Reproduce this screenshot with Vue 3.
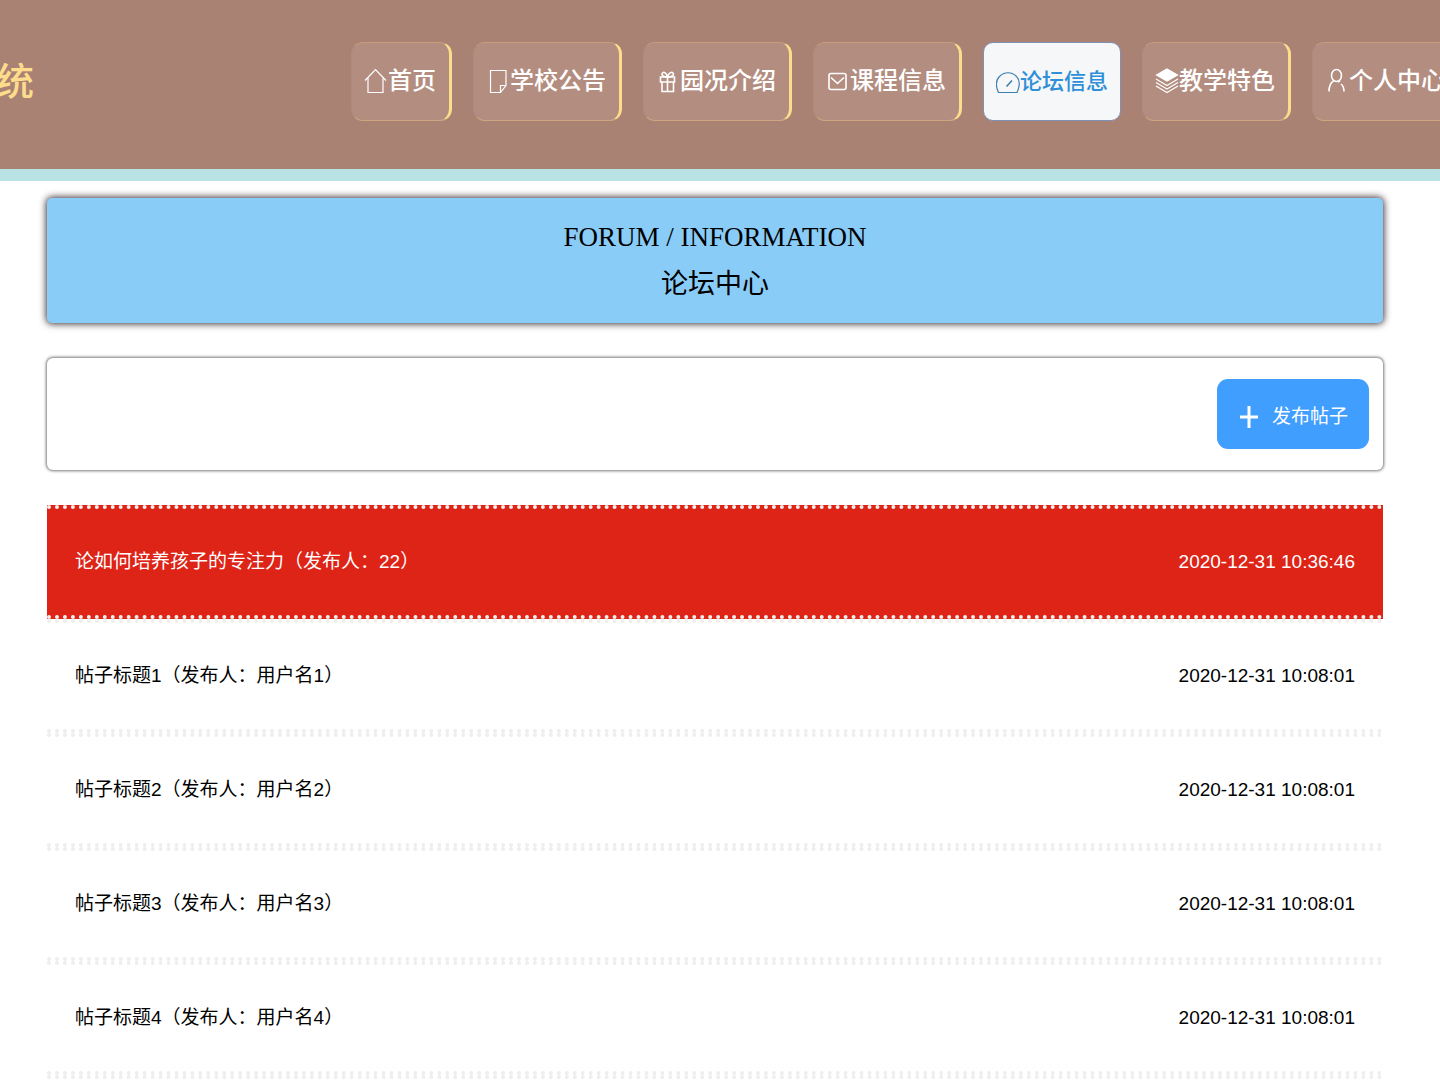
<script setup>
const navItems = [
  { label: '首页', icon: 'house' },
  { label: '学校公告', icon: 'note' },
  { label: '园况介绍', icon: 'gift' },
  { label: '课程信息', icon: 'mail' },
  { label: '论坛信息', icon: 'gauge', active: true },
  { label: '教学特色', icon: 'layers' },
  { label: '个人中心', icon: 'user' },
]

const posts = [
  { title: '论如何培养孩子的专注力（发布人：22）', time: '2020-12-31 10:36:46', highlighted: true },
  { title: '帖子标题1（发布人：用户名1）', time: '2020-12-31 10:08:01' },
  { title: '帖子标题2（发布人：用户名2）', time: '2020-12-31 10:08:01' },
  { title: '帖子标题3（发布人：用户名3）', time: '2020-12-31 10:08:01' },
  { title: '帖子标题4（发布人：用户名4）', time: '2020-12-31 10:08:01' },
]
</script>

<template>
  <div class="page">
    <header class="header">
      <div class="logo">统</div>
      <nav class="nav">
        <a
          v-for="item in navItems"
          :key="item.label"
          href="#"
          class="nav-item"
          :class="{ active: item.active }"
        >
          <svg class="icon" viewBox="0 0 24 28" aria-hidden="true">
            <path v-if="item.icon === 'house'" d="M1 13.5 11.5 2.500 22 13.500M4 11v14.500h15V11" />
            <g v-else-if="item.icon === 'note'">
              <path d="M4.500 3.500h15.500v15l-5.500 7h-10z" />
              <path d="M20 18.500h-5.500v7" />
            </g>
            <g v-else-if="item.icon === 'gift'" class="medium">
              <path d="M4.500 10h14v5h-14zM6 15v9.500h11.500V15M11.500 10v14.500" />
              <path d="M11.500 10C6.500 10 5 7.500 6.500 6S10.500 6 11.500 10C12.500 6 15.500 4.500 17 6S16.500 10 11.500 10z" />
            </g>
            <g v-else-if="item.icon === 'mail'" class="medium">
              <rect x="3" y="6.500" width="17" height="16" rx="2" />
              <path d="m5 10.500 6.500 6 6.500-6" />
            </g>
            <g v-else-if="item.icon === 'gauge'">
              <path d="M2.500 24.500C-.5 18 0 12 3.500 8.500c4.500-5 12.500-5 17 0C24 12 24 18 21 24.500z" />
              <path class="medium" d="m10.500 18.500 5.500-6" />
            </g>
            <g v-else-if="item.icon === 'layers'">
              <path class="solid" d="m12 2 10.500 6L12 14 1.500 8z" />
              <path d="m1 12 11 6.500L23 12M1 15.500 12 22l11-6.500M1 19l11 6.500L23 19" />
            </g>
            <g v-else class="medium">
              <ellipse cx="11.500" cy="8.500" rx="5" ry="6" />
              <path d="M8.500 14c-3.500 2-4.500 5.500-4.500 10.500M15 14l-2 1M16 17c2.500 2 3 4 3 7.500" />
            </g>
          </svg>
          <span>{{ item.label }}</span>
        </a>
      </nav>
    </header>

    <main class="main">
      <section class="banner">
        <h1>FORUM / INFORMATION</h1>
        <h2>论坛中心</h2>
      </section>

      <section class="toolbar">
        <button type="button" class="publish">
          <svg class="plus" viewBox="0 0 18 22" aria-hidden="true">
            <path d="M9 0v22M0 11h18" />
          </svg>
          <span>发布帖子</span>
        </button>
      </section>

      <ul class="posts">
        <li
          v-for="post in posts"
          :key="post.title"
          class="post"
          :class="{ highlighted: post.highlighted }"
        >
          <a href="#">{{ post.title }}</a>
          <time>{{ post.time }}</time>
        </li>
      </ul>
    </main>
  </div>
</template>

<style>
body {
  margin: 0;
  background: #fff;
}
</style>

<style scoped>
.page {
  overflow: hidden;
  font-family: "Liberation Sans", "Noto Sans CJK SC", sans-serif;
  color: #000;
}

.header {
  display: flex;
  align-items: center;
  gap: 317px;
  padding: 42px 0 48px;
  background: #aa8274;
  border-bottom: 12px solid #b9e2e5;
}

.logo {
  display: flex;
  flex: 0 0 34px;
  justify-content: flex-end;
  overflow: hidden;
  color: #fddc8c;
  font-size: 38px;
  font-weight: 500;
  line-height: 60px;
}

.nav {
  display: flex;
  flex: none;
  gap: 21px;
}

.nav-item {
  display: flex;
  align-items: center;
  box-sizing: border-box;
  height: 79px;
  padding: 0 13px 2px 12px;
  border: 1px solid;
  border-color: #c69c7c #fddc8c #d0a682 #b08a7e;
  border-right-width: 3px;
  border-radius: 12px;
  background: #b38d80;
  color: #fff;
  font-size: 24px;
  font-weight: 500;
  line-height: 36px;
  text-decoration: none;
  white-space: nowrap;
}

.nav-item.active {
  padding: 0 12px;
  border: 1px solid #7f8fb5;
  border-radius: 10px;
  background: #f6f7f9;
  color: #2f8fd8;
  font-size: 22px;
}

.icon {
  width: 24px;
  height: 28px;
  fill: none;
  stroke: currentColor;
  stroke-width: 1.2;
}

.medium {
  stroke-width: 1.6;
}

.active .icon {
  color: #3f7fae;
}

.solid {
  fill: currentColor;
}

.main {
  padding: 17px 57px 0 47px;
}

.banner {
  padding: 16px 0 15px;
  border-radius: 5px;
  background: #8accf8;
  box-shadow: 0 0 7px 1px #403438;
  text-align: center;
}

.banner h1,
.banner h2 {
  margin: 0;
  font-family: "Liberation Serif", "Noto Sans CJK SC", serif;
  font-size: 27px;
  font-weight: 400;
  line-height: 47px;
}

.toolbar {
  display: flex;
  justify-content: flex-end;
  margin-top: 35px;
  padding: 21px 14px;
  border-radius: 6px;
  background: #fff;
  box-shadow: 0 0 3px 1px #777;
}

.publish {
  display: flex;
  align-items: center;
  gap: 14px;
  height: 70px;
  padding: 6px 21px 0 23px;
  border: 0;
  border-radius: 11px;
  background: #409eff;
  color: #fff;
  font-family: inherit;
  font-size: 19px;
  line-height: 24px;
}

.plus {
  width: 18px;
  height: 22px;
  fill: none;
  stroke: currentColor;
  stroke-width: 3;
}

.posts {
  margin: 35px 0 0;
  padding: 0;
  border-bottom: 4px dotted #eee;
  list-style: none;
}

.post {
  display: flex;
  align-items: center;
  justify-content: space-between;
  box-sizing: border-box;
  height: 114px;
  padding: 0 28px;
  border-top: 4px dotted #eee;
  border-bottom: 4px dotted #eee;
  font-size: 19px;
  line-height: 24px;
}

.post a {
  color: inherit;
  text-decoration: none;
}

.post.highlighted {
  background: #de2317;
  color: #fff;
}
</style>
